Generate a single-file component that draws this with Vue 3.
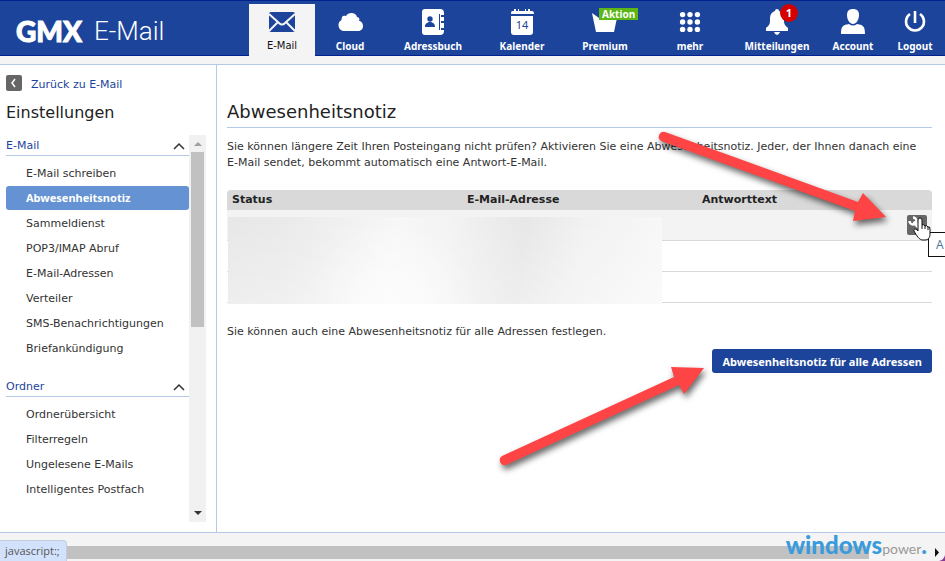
<template>
  <div class="page">
    <header class="topbar">
      <a href="#" class="brand"><b>GMX</b> <span>E-Mail</span></a>
      <nav class="nav">
        <a
          v-for="item in navItems"
          :key="item.id"
          href="#"
          class="navItem"
          :class="{ active: item.id === 'mail' }"
        >
          <span class="navIcon">
            <svg v-if="item.id === 'mail'" width="28" height="28" viewBox="0 0 28 28">
              <rect x="1" y="4" width="26" height="20" rx="2" fill="#1c449b" />
              <path d="M1 6l10 9q3 3 6 0L27 6M1 23l9-9M27 23l-9-9" fill="none" stroke="#f4f4f4" stroke-width="2" />
            </svg>
            <svg v-else-if="item.id === 'cloud'" width="28" height="28" viewBox="0 0 28 28">
              <path d="M7 23a6 6 0 0 1-1.500-11C5.500 8 7 7 10 8c2-4 10-4 11 1 2 0 3 2 2 4 5 0 6 10-1 10z" />
            </svg>
            <svg v-else-if="item.id === 'contacts'" width="28" height="28" viewBox="0 0 28 28">
              <path d="M6 1h14v26H6a3 3 0 0 1-3-3V4a3 3 0 0 1 3-3z" />
              <path d="M21 1q4 0 4 4v2h-4zM21 9h4v4h-4zM21 15h4v5h-4zM21 22h4v1q0 4-4 4z" />
              <path d="M20 1h2v26h-2z" />
              <path d="M20.500 6v16" stroke="#1c449b" />
              <circle cx="11" cy="11" r="2.700" fill="#1c449b" />
              <path d="M6 19c0-4 2-4 4-5h2c2 1 4 1 4 5z" fill="#1c449b" />
            </svg>
            <svg v-else-if="item.id === 'calendar'" width="28" height="28" viewBox="0 0 28 28">
              <path d="M4 3h2V1h2v2h2V1h1v2h6V1h1v2h2V1h2v2h2q2 0 2 3H3q0-3 1-3z" />
              <path d="M3 8h22v16q0 3-3 3H6q-3 0-3-3z" />
              <text x="14" y="21" text-anchor="middle" class="calDay">14</text>
            </svg>
            <svg v-else-if="item.id === 'premium'" width="28" height="28" viewBox="0 0 28 28">
              <path d="M1 5l7 5h18l-3 14H5z" />
            </svg>
            <svg v-else-if="item.id === 'more'" width="28" height="28" viewBox="0 0 28 28">
              <template v-for="x in 3" :key="x">
                <circle v-for="y in 3" :key="y" :cx="x * 7.4 - 0.8" :cy="y * 7.4 - 0.8" r="2.7" />
              </template>
            </svg>
            <svg v-else-if="item.id === 'news'" width="28" height="28" viewBox="0 0 28 28">
              <path d="M14 1q2 0 2 2c5 2 5 5 5 10 0 4 2 5 4 7v3H3v-3c2-2 4-3 4-7 0-5 0-8 5-10q0-2 2-2zM11 24h6q-1 3-3 3t-3-3z" />
            </svg>
            <svg v-else-if="item.id === 'account'" width="28" height="28" viewBox="0 0 28 28">
              <path d="M14 1c4 0 6 2 6 6 0 5-3 9-6 9s-6-4-6-9c0-4 2-6 6-6z" />
              <path d="M2 26c0-8 2-9 8-10q4 3 8 0c6 1 8 2 8 10z" />
            </svg>
            <svg v-else width="28" height="28" viewBox="0 0 28 28">
              <path d="M9 6a9 9 0 1 0 10 0M14 3v12" fill="none" stroke="#fff" stroke-width="2.600" />
            </svg>
            <em v-if="item.tag" class="tag">{{ item.tag }}</em>
            <em v-if="item.count" class="count">{{ item.count }}</em>
          </span>
          {{ item.label }}
        </a>
      </nav>
    </header>

    <div class="body">
      <aside class="sidebar">
        <a href="#" class="back">
          <svg width="16" height="16" viewBox="0 0 16 16">
            <rect width="16" height="16" rx="2" fill="#666" />
            <path d="M9 4L6 8l3 4" fill="none" stroke="#fff" stroke-width="1.500" />
          </svg>
          Zurück zu E-Mail
        </a>
        <h2>Einstellungen</h2>
        <div class="scrollArea">
          <div class="groups">
            <section v-for="group in groups" :key="group.title">
              <button type="button" class="groupTitle">
                {{ group.title }}
                <svg width="12" height="8" viewBox="0 0 12 8">
                  <path d="M1 7l5-5 5 5" fill="none" stroke="#333" stroke-width="1.500" />
                </svg>
              </button>
              <ul>
                <li v-for="entry in group.entries" :key="entry">
                  <a href="#" :class="{ selected: entry === selected }" @click.prevent="selected = entry">{{ entry }}</a>
                </li>
              </ul>
            </section>
          </div>
          <div class="scrollbar">
            <svg width="17" height="17" viewBox="0 0 17 17"><path d="M5 11l4-4 4 4z" fill="#a0a0a0" /></svg>
            <div class="thumb"></div>
            <svg width="17" height="17" viewBox="0 0 17 17"><path d="M5 6h8l-4 4z" fill="#333" /></svg>
          </div>
        </div>
      </aside>

      <main class="content">
        <h1>Abwesenheitsnotiz</h1>
        <p>
          Sie können längere Zeit Ihren Posteingang nicht prüfen? Aktivieren Sie eine Abwesenheitsnotiz. Jeder, der Ihnen danach eine E-Mail sendet, bekommt automatisch eine Antwort-E-Mail.
        </p>
        <div class="tableWrap">
          <table>
            <thead>
              <tr>
                <th>Status</th>
                <th>E-Mail-Adresse</th>
                <th>Antworttext</th>
              </tr>
            </thead>
            <tbody>
              <tr v-for="row in 3" :key="row">
                <td></td>
                <td></td>
                <td>
                  <button v-if="row === 1" type="button" class="tool" aria-label="Abwesenheitsnotiz">
                    <svg width="20" height="20" viewBox="0 0 20 20">
                      <path d="M6 2.500A3.500 3.500 0 1 1 2.500 6" fill="none" stroke="#fff" stroke-width="2.500" />
                      <path d="M8 8l8 8" stroke="#fff" stroke-width="4" stroke-linecap="round" />
                    </svg>
                  </button>
                </td>
              </tr>
            </tbody>
          </table>
          <div class="masked"></div>
        </div>
        <p>Sie können auch eine Abwesenheitsnotiz für alle Adressen festlegen.</p>
        <div class="actions">
          <button type="button" class="primary">Abwesenheitsnotiz für alle Adressen</button>
        </div>
      </main>
    </div>

    <footer class="footer">
      <div class="status">javascript:;</div>
      <div class="track"></div>
      <div class="watermark"><b>windows</b><span>power</span><b>.</b></div>
      <svg class="corner" width="12" height="28" viewBox="0 0 12 28">
        <path d="M2 15v9l4-4.500z" fill="#111" />
        <path d="M12 22v6H6q5-1 6-6z" fill="#8b3a94" />
      </svg>
    </footer>

    <svg class="arrows" width="460" height="400" viewBox="485 100 460 400">
      <g fill="#fe4444">
        <path d="M665 132L858 202 863 193 886 217 853 221 855 211 661 141A5 5 0 0 1 665 132z" />
        <path d="M502 456L674 377 671 367 704 368 684 394 679 385 506 465A5 5 0 0 1 502 456z" />
      </g>
    </svg>
    <div class="tooltip">A</div>
    <svg class="cursor" width="18" height="24" viewBox="0 0 18 24">
      <path
        d="M5 14V3q0-2 2-2t2 2v5q2-1 3 1 2-1 3 1 2-1 2 2v5c0 4-2 6-5 6h-2c-4 0-6-4-9-9-1-2 2-3 4 0z"
        fill="#fff"
        stroke="#111"
      />
      <path d="M9 8v4M12 9v3M15 10v3" stroke="#111" />
    </svg>
  </div>
</template>

<script setup>
import { ref } from "vue";

const selected = ref("Abwesenheitsnotiz");

const navItems = [
  { id: "mail", label: "E-Mail" },
  { id: "cloud", label: "Cloud" },
  { id: "contacts", label: "Adressbuch" },
  { id: "calendar", label: "Kalender" },
  { id: "premium", label: "Premium", tag: "Aktion" },
  { id: "more", label: "mehr" },
  { id: "news", label: "Mitteilungen", count: 1 },
  { id: "account", label: "Account" },
  { id: "logout", label: "Logout" },
];

const groups = [
  {
    title: "E-Mail",
    entries: [
      "E-Mail schreiben",
      "Abwesenheitsnotiz",
      "Sammeldienst",
      "POP3/IMAP Abruf",
      "E-Mail-Adressen",
      "Verteiler",
      "SMS-Benachrichtigungen",
      "Briefankündigung",
    ],
  },
  {
    title: "Ordner",
    entries: ["Ordnerübersicht", "Filterregeln", "Ungelesene E-Mails", "Intelligentes Postfach"],
  },
];
</script>

<style>
body {
  margin: 0;
}
</style>

<style scoped>
.page {
  position: relative;
  display: flex;
  flex-direction: column;
  min-height: 100vh;
  overflow: hidden;
  background: #f4f4f4;
  color: #333;
  font-family: Verdana, "DejaVu Sans", sans-serif;
  font-size: 11px;
  line-height: 16px;
}

.page * {
  box-sizing: border-box;
}

a {
  color: #1c449b;
  text-decoration: none;
}

button {
  font: inherit;
  border: 0;
  padding: 0;
  cursor: pointer;
}

.topbar {
  display: flex;
  justify-content: space-between;
  height: 56px;
  background: #1c449b;
  border-top: 1px solid #00218f;
  border-bottom: 1px solid #00218f;
}

.brand {
  display: flex;
  align-items: center;
  gap: 12px;
  padding: 5px 0 0 16px;
  color: #fff;
  font-family: Roboto, sans-serif;
  font-size: 26px;
  font-weight: 300;
}

.brand b {
  font-family: Lato, sans-serif;
  font-size: 28px;
  font-weight: 900;
  -webkit-text-stroke: 1px #fff;
}

.nav {
  display: grid;
  grid-template-columns: 66px 70px 96px 82px 84px 86px 88px 64px 60px;
}

.navItem {
  display: flex;
  flex-direction: column;
  align-items: center;
  height: 52px;
  margin-top: 3px;
  padding-top: 4px;
  color: #fff;
  font-family: "Noto Sans", sans-serif;
  font-size: 10px;
  font-weight: bold;
  line-height: 20px;
}

.navItem.active {
  background: #f4f4f4;
  color: #111;
  font-family: Verdana, "DejaVu Sans", sans-serif;
  font-weight: normal;
}

.navIcon {
  position: relative;
  height: 28px;
}

.navIcon svg {
  display: block;
  fill: #fff;
}

.calDay {
  fill: #1c449b;
  font-size: 11px;
  font-weight: normal;
}

.tag,
.count {
  position: absolute;
  background: #5cb615;
  font-style: normal;
  line-height: 12px;
}

.tag {
  top: 0;
  left: 8px;
  padding: 0 3px;
}

.count {
  top: -4px;
  right: -7px;
  width: 18px;
  border-radius: 9px;
  background: #d40000;
  font-size: 11px;
  line-height: 18px;
  text-align: center;
}

.body {
  display: flex;
  flex: 1;
  margin-top: 8px;
  background: #fff;
  border-top: 1px solid #b4cae6;
  border-bottom: 1px solid #b4cae6;
}

.sidebar {
  display: flex;
  flex-direction: column;
  width: 217px;
  padding: 10px 10px 10px 6px;
  border-right: 1px solid #b4cae6;
}

.back {
  display: flex;
  gap: 9px;
  line-height: 20px;
}

h1,
h2 {
  margin: 0;
  font-weight: normal;
  color: #222;
}

h2 {
  margin: 4px 0 8px;
  font-size: 16px;
  line-height: 28px;
}

.scrollArea {
  display: flex;
  flex: 1;
}

.groups {
  flex: 1;
}

.groupTitle {
  display: flex;
  align-items: center;
  justify-content: space-between;
  width: 100%;
  height: 21px;
  padding: 2px 4px 0 0;
  background: none;
  border-bottom: 1px solid #b4cae6;
  color: #1c449b;
}

ul {
  margin: 0;
  padding: 5px 0 15px;
  list-style: none;
}

li a {
  display: block;
  height: 24px;
  padding-left: 20px;
  margin-bottom: 1px;
  border-radius: 3px;
  color: #333;
  line-height: 26px;
}

li a.selected {
  background: #6492d2;
  color: #fff;
  font-family: "Noto Sans", sans-serif;
  font-weight: bold;
  line-height: 24px;
}

.scrollbar {
  display: flex;
  flex-direction: column;
  justify-content: space-between;
  width: 17px;
  background: #f1f1f1;
}

.thumb {
  height: 175px;
  margin: 0 2px auto;
  background: #c1c1c1;
}

.content {
  flex: 1;
  padding: 32px 13px 20px 10px;
}

h1 {
  margin-bottom: 11px;
  border-bottom: 1px solid #b4cae6;
  font-size: 18px;
  line-height: 30px;
}

p {
  margin: 0;
  padding-right: 8px;
}

.tableWrap {
  position: relative;
  margin: 19px 0 21px;
}

table {
  width: 100%;
  border-spacing: 0;
  table-layout: fixed;
}

th {
  height: 20px;
  padding: 0 5px;
  background: #d9d9d9;
  color: #222;
  text-align: left;
}

th:first-child {
  border-top-left-radius: 4px;
}

th:last-child {
  border-top-right-radius: 4px;
}

td {
  height: 31px;
  padding: 0 5px;
  border-bottom: 1px solid #d9d9d9;
  text-align: right;
}

tbody tr:first-child td {
  background: #f3f3f3;
}

.tool {
  display: block;
  width: 20px;
  height: 20px;
  margin-left: auto;
  border-radius: 2px;
  background: #666;
}

.masked {
  position: absolute;
  top: 27px;
  bottom: -1px;
  left: 1px;
  width: 434px;
  background:
    radial-gradient(circle at 38% 100%, rgba(255, 255, 255, 0.6), transparent 30%),
    linear-gradient(transparent, rgba(255, 255, 255, 0.3)),
    linear-gradient(97deg, #e7e7e7, #eaeaea 14%, #f7f7f7 38%, #f3f3f3 50%, #e7e7e7 67%, #f1f1f1 80%, #f8f8f8);
}

.actions {
  display: flex;
  justify-content: flex-end;
  margin-top: 9px;
}

.primary {
  height: 24px;
  padding: 1px 10px 0;
  border-radius: 3px;
  background: #1c449b;
  color: #fff;
  font-family: "Noto Sans", sans-serif;
  font-weight: bold;
}

.footer {
  position: relative;
  display: flex;
  align-items: flex-end;
  height: 28px;
}

.status {
  height: 21px;
  width: 67px;
  padding-left: 5px;
  background: #d3e2fc;
  border: solid #c2cede;
  border-width: 1px 1px 0 0;
  border-top-right-radius: 4px;
  color: #555;
  font-family: "Open Sans", sans-serif;
  line-height: 20px;
}

.track {
  flex: 1;
  height: 13px;
  margin: 0 76px 2px 0;
  background: #c1c1c1;
}

.watermark {
  position: absolute;
  right: 18px;
  bottom: 0;
  color: #999;
  font-family: Lato, sans-serif;
  font-size: 14px;
  line-height: 24px;
}

.watermark b {
  color: #3a9bdc;
  font-size: 24px;
  font-weight: 900;
}

.corner {
  position: absolute;
  right: 0;
  bottom: 0;
}

.arrows {
  position: absolute;
  top: 100px;
  right: 0;
  filter: drop-shadow(2px 4px 3px rgba(0, 0, 0, 0.6));
  pointer-events: none;
}

.tooltip {
  position: absolute;
  top: 232px;
  right: 0;
  width: 17px;
  height: 25px;
  padding-left: 7px;
  background: #fff;
  border: 1px solid #111;
  border-right: 0;
  color: #4a7192;
  font-family: "Open Sans", sans-serif;
  font-size: 12px;
  line-height: 23px;
}

.cursor {
  position: absolute;
  top: 217px;
  right: 14px;
}
</style>
